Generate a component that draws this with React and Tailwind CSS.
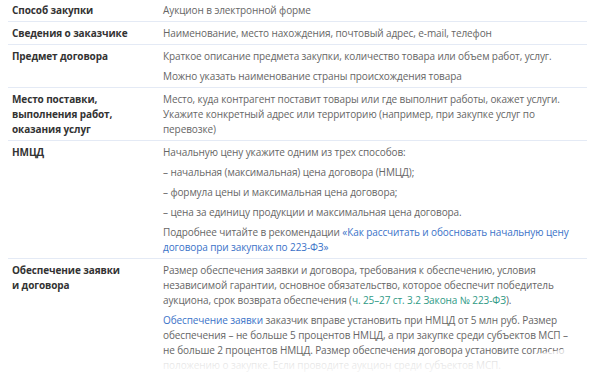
import React from "react";

const rows = [
  { label: "Способ закупки", values: [["Аукцион в электронной форме"]] },
  {
    label: "Сведения о заказчике",
    values: [["Наименование, место нахождения, почтовый адрес, e-mail, телефон"]],
  },
  {
    label: "Предмет договора",
    values: [
      ["Краткое описание предмета закупки, количество товара или объем работ, услуг."],
      ["Можно указать наименование страны происхождения товара"],
    ],
  },
  {
    label: "Место поставки, выполнения работ, оказания услуг",
    narrow: true,
    values: [
      [
        "Место, куда контрагент поставит товары или где выполнит работы, окажет услуги. Укажите конкретный адрес или территорию (например, при закупке услуг по перевозке)",
      ],
    ],
  },
  {
    label: "НМЦД",
    values: [
      ["Начальную цену укажите одним из трех способов:"],
      ["– начальная (максимальная) цена договора (НМЦД);"],
      ["– формула цены и максимальная цена договора;"],
      ["– цена за единицу продукции и максимальная цена договора."],
      [
        "Подробнее читайте в рекомендации ",
        { link: "«Как рассчитать и обосновать начальную цену договора при закупках по 223-ФЗ»" },
      ],
    ],
  },
  {
    label: "Обеспечение заявки и договора",
    narrow: true,
    values: [
      [
        "Размер обеспечения заявки и договора, требования к обеспечению, условия независимой гарантии, основное обязательство, которое обеспечит победитель аукциона, срок возврата обеспечения (",
        { green: "ч. 25–27 ст. 3.2 Закона № 223-ФЗ" },
        ").",
      ],
      [
        { link: "Обеспечение заявки" },
        " заказчик вправе установить при НМЦД от 5 млн руб. Размер обеспечения – не больше 5 процентов НМЦД, а при закупке среди субъектов МСП – не больше 2 процентов НМЦД. Размер обеспечения договора установите согласно положению о закупке. Если проводите аукцион среди субъектов МСП.",
      ],
    ],
  },
];

function Part({ p }) {
  if (typeof p === "string") return p;
  if (p.link) return <span className="text-[#3a72c8]">{p.link}</span>;
  return <span className="text-[#2f9a86]">{p.green}</span>;
}

export default function App() {
  return (
    <div className="relative w-[600px] h-[375px] overflow-hidden bg-white font-['Open_Sans',sans-serif]">
      <div className="ml-[8px] w-[579px] -mt-px">
        {rows.map((row, i) => (
          <div
            key={i}
            className="flex border-b border-[#e4eaf5] py-[3.5px] text-[10px] leading-[15px] tracking-[-0.1px]"
          >
            <div
              className={
                "w-[155px] shrink-0 pl-[4px] font-bold text-[#333] " +
                (row.narrow ? "pr-[40px]" : "pr-[8px]")
              }
            >
              {row.label}
            </div>
            <div className="flex-1 pr-[10px] text-[#666] flex flex-col gap-[5px]">
              {row.values.map((v, j) => (
                <p key={j}>
                  {v.map((p, k) => (
                    <Part key={k} p={p} />
                  ))}
                </p>
              ))}
            </div>
          </div>
        ))}
      </div>
      <svg
        className="absolute left-0 bottom-0"
        width="600"
        height="40"
        viewBox="0 0 600 40"
      >
        <defs>
          <linearGradient id="fade" x1="0" y1="0" x2="0" y2="1">
            <stop offset="0" stopColor="#fff" stopOpacity="0.6" />
            <stop offset="1" stopColor="#fff" stopOpacity="0.95" />
          </linearGradient>
        </defs>
        <path
          d="M0 30 C40 12 80 8 120 14 C220 30 380 26 500 22 C540 20 570 14 600 4 L600 40 L0 40 Z"
          fill="url(#fade)"
        />
      </svg>
    </div>
  );
}
